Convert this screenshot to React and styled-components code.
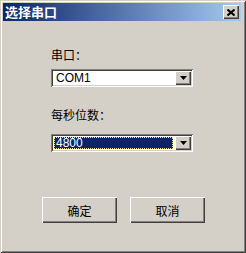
import styled, { createGlobalStyle } from "styled-components";

const GlobalStyle = createGlobalStyle`
  html, body {
    margin: 0;
    padding: 0;
    background: #d4d0c8;
  }
  * { box-sizing: border-box; }
`;

const Window = styled.div`
  width: 246px;
  height: 253px;
  background: #d4d0c8;
  padding: 3px 5px 3px 3px;
  box-shadow: inset 1px 1px 0 #d4d0c8, inset -1px -1px 0 #404040,
    inset 2px 2px 0 #ffffff, inset -2px -2px 0 #808080;
  display: flex;
  flex-direction: column;
  font-family: "Noto Sans CJK SC", "Liberation Sans", sans-serif;
`;

const TitleBar = styled.div`
  height: 18px;
  background: linear-gradient(to right, #0a246a, #a6caf0);
  display: flex;
  align-items: center;
  justify-content: space-between;
  padding: 0 2px 0 2px;
`;

const Title = styled.span`
  color: #fff;
  font-weight: bold;
  font-size: 13px;
  line-height: 14px;
`;

const Raised = styled.div`
  background: #d4d0c8;
  box-shadow: inset 1px 1px 0 #ffffff, inset -1px -1px 0 #404040,
    inset -2px -2px 0 #808080;
  display: flex;
  align-items: center;
  justify-content: center;
`;

const CloseBtn = styled(Raised)`
  width: 16px;
  height: 14px;
`;

const Form = styled.div`
  display: flex;
  flex-direction: column;
  padding: 27px 0 0 48px;
`;

const Label = styled.div`
  font-size: 12px;
  line-height: 14px;
  height: 14px;
  color: #000;
  margin-top: ${(p) => p.$top || 0}px;
  margin-bottom: ${(p) => p.$bottom}px;
`;

const Combo = styled.div`
  width: 142px;
  height: 18px;
  background: #fff;
  padding: 2px;
  box-shadow: inset 1px 1px 0 #808080, inset -1px -1px 0 #ffffff,
    inset 2px 2px 0 #404040, inset -2px -2px 0 #d4d0c8;
  display: flex;
`;

const ComboText = styled.div`
  flex: 1;
  margin: 1px 2px 1px 1px;
  padding-left: 2px;
  font-family: "Liberation Sans", Arial, sans-serif;
  font-size: 12px;
  line-height: 12px;
  color: ${(p) => (p.$selected ? "#fff" : "#000")};
  background: ${(p) => (p.$selected ? "#0a246a" : "transparent")};
  outline: ${(p) => (p.$selected ? "1px dotted #e8e0a0" : "none")};
  outline-offset: -1px;
`;

const DropBtn = styled(Raised)`
  width: 16px;
  height: 14px;
`;

const ButtonRow = styled.div`
  display: flex;
  gap: 13px;
  padding-left: 39px;
  margin-top: 45px;
`;

const Button = styled(Raised)`
  width: 75px;
  height: 26px;
  font-size: 12px;
  color: #000;
`;

const Arrow = () => (
  <svg width="7" height="4" viewBox="0 0 7 4">
    <path d="M0 0h7L3.5 4z" fill="#000" />
  </svg>
);

export default function App() {
  return (
    <>
      <GlobalStyle />
      <Window>
        <TitleBar>
          <Title>选择串口</Title>
          <CloseBtn>
            <svg width="8" height="7" viewBox="0 0 8 7">
              <path d="M0.5 0.5l7 6M7.5 0.5l-7 6" stroke="#000" strokeWidth="2" />
            </svg>
          </CloseBtn>
        </TitleBar>
        <Form>
          <Label $bottom={7}>串口：</Label>
          <Combo>
            <ComboText>COM1</ComboText>
            <DropBtn><Arrow /></DropBtn>
          </Combo>
          <Label $top={21} $bottom={12}>每秒位数：</Label>
          <Combo>
            <ComboText $selected>4800</ComboText>
            <DropBtn><Arrow /></DropBtn>
          </Combo>
        </Form>
        <ButtonRow>
          <Button>确定</Button>
          <Button>取消</Button>
        </ButtonRow>
      </Window>
    </>
  );
}
